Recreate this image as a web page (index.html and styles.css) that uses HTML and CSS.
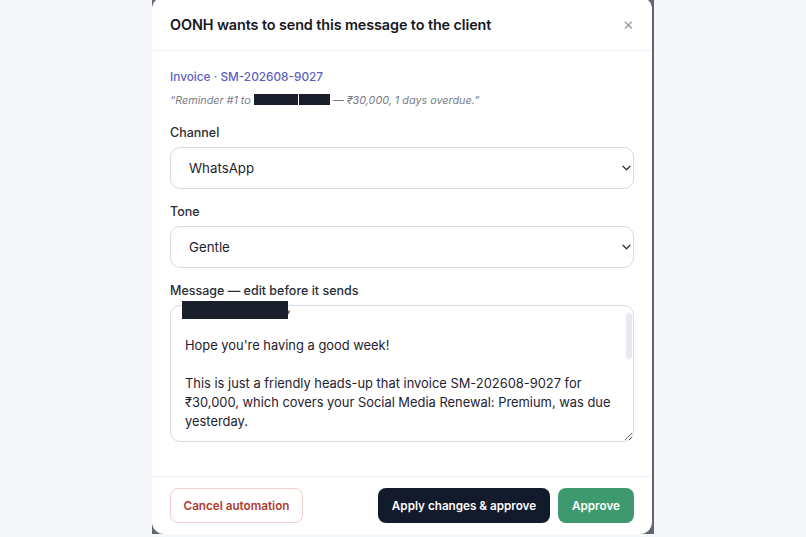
FILE: index.html
```html
<!DOCTYPE html>
<html lang="en">
<head>
<meta charset="utf-8">
<title>Approve message</title>
<link rel="stylesheet" href="styles.css">
</head>
<body>
<div class="backdrop">
  <div class="modal">
    <div class="modal-header">
      <h2 class="title">OONH wants to send this message to the client</h2>
      <span class="close">×</span>
    </div>
    <div class="modal-body">
      <div class="invoice">Invoice · SM-202608-9027</div>
      <div class="quote">“Reminder #1 to <span class="redact r1"></span><span class="redact r2"></span> — ₹30,000, 1 days overdue.”</div>
      <label class="label">Channel</label>
      <div class="select"><span>WhatsApp</span><svg width="9" height="6" viewBox="0 0 9 6"><path d="M1 1.2l3.5 3.5 3.5-3.5" fill="none" stroke="#333" stroke-width="1.3" stroke-linecap="round" stroke-linejoin="round"/></svg></div>
      <label class="label">Tone</label>
      <div class="select"><span>Gentle</span><svg width="9" height="6" viewBox="0 0 9 6"><path d="M1 1.2l3.5 3.5 3.5-3.5" fill="none" stroke="#333" stroke-width="1.3" stroke-linecap="round" stroke-linejoin="round"/></svg></div>
      <label class="label">Message — edit before it sends</label>
      <div class="field">
        <div class="msg" id="msg"><p><span class="name-gap"></span>,</p><p>&nbsp;</p><p>Hope you're having a good week!</p><p>&nbsp;</p><p>This is just a friendly heads-up that invoice SM-202608-9027 for ₹30,000, which covers your Social Media Renewal: Premium, was due yesterday.</p><p>&nbsp;</p><p>Whenever it's convenient, you can settle it using the payment link below. If you've already paid, please ignore this note.</p><p>&nbsp;</p><p>Thank you so much!</p><p>&nbsp;</p><p>Warm regards,</p><p>OONH</p></div>
        <span class="thumb"></span>
        <span class="redact name-box"></span>
      </div>
    </div>
    <div class="modal-footer">
      <button class="btn btn-cancel">Cancel automation</button>
      <div class="actions">
        <button class="btn btn-dark">Apply changes &amp; approve</button>
        <button class="btn btn-green">Approve</button>
      </div>
    </div>
  </div>
</div>
<script src="script.js"></script>
</body>
</html>
```
FILE: styles.css
```css
* { box-sizing: border-box; }
html, body { margin: 0; height: 100%; }
body {
  background: #f6f7fb;
  font-family: Inter, "Noto Sans", sans-serif;
  color: #1f2230;
  overflow: hidden;
}
.backdrop {
  margin-left: 152px;
  width: 502px;
  height: 537px;
  background: #62666f;
  padding-right: 2px;
}
.modal {
  width: 500px;
  height: 537px;
  margin-top: -3px;
  background: #fff;
  border-radius: 12px;
  display: flex;
  flex-direction: column;
}
.modal-header {
  height: 54px;
  flex: none;
  display: flex;
  align-items: center;
  justify-content: space-between;
  padding: 2px 20px 0 18px;
  border-bottom: 1px solid #eef0f3;
}
.title {
  margin: 0;
  font-size: 14.4px;
  font-weight: 600;
  color: #16181f;
  letter-spacing: -0.1px;
}
.close {
  font-size: 17px;
  color: #9b9ea8;
  line-height: 1;
  margin-right: -2px;
}
.modal-body {
  flex: none;
  height: 425px;
  padding: 18px 18px 0;
  display: flex;
  flex-direction: column;
}
.invoice {
  font-size: 11.8px;
  font-weight: 500;
  color: #5b5fc0;
  line-height: 16px;
}
.quote {
  margin-top: 8px;
  font-size: 10.8px;
  font-style: italic;
  color: #7a7d87;
  line-height: 16px;
}
.redact {
  display: inline-block;
  background: #1b1e2b;
  vertical-align: -1px;
}
.r1 { width: 44px; height: 11px; margin-right: 1px; }
.r2 { width: 31px; height: 11px; }
.label {
  display: block;
  font-size: 12.5px;
  font-weight: 500;
  color: #2a2d36;
  line-height: 18px;
  margin-top: 15px;
  margin-bottom: 5px;
}
.select + .label { margin-top: 14px; }
.select {
  height: 42px;
  border: 1.5px solid #d9dbe4;
  border-radius: 10px;
  display: flex;
  align-items: center;
  justify-content: space-between;
  padding: 0 2px 0 18px;
  font-size: 13.3px;
  color: #1f2230;
}
.field {
  position: relative;
  margin-top: 0;
}
.msg {
  height: 137px;
  border: 1.5px solid #d9dbe4;
  border-radius: 10px;
  padding: 10px 14px 10px 14px;
  overflow-y: scroll;
  resize: vertical;
  font-size: 12.9px;
  line-height: 19px;
  color: #1f2230;
  scrollbar-width: none;
}
.msg::-webkit-scrollbar { width: 0; height: 0; }
.msg p { margin: 0; }
.thumb {
  position: absolute;
  right: 2px;
  top: 8px;
  width: 6px;
  height: 46px;
  border-radius: 3px;
  background: #e6e8f6;
}
.name-gap { display: inline-block; width: 102px; }
.name-box {
  position: absolute;
  left: 12px;
  top: -4px;
  width: 106px;
  height: 18px;
}
.modal-footer {
  flex: none;
  height: 58px;
  border-top: 1px solid #eef0f3;
  padding: 0 18px;
  display: flex;
  align-items: center;
  justify-content: space-between;
}
.actions { display: flex; gap: 8px; }
.btn {
  height: 35px;
  border-radius: 8px;
  font-family: Inter, "Noto Sans", sans-serif;
  font-size: 11.7px;
  font-weight: 600;
  padding: 0;
  white-space: nowrap;
  border: 1px solid transparent;
}
.btn-cancel {
  width: 133px;
  background: #fff;
  border-color: #f0cfcc;
  color: #b03a30;
}
.btn-dark {
  width: 172px;
  background: #131a2c;
  color: #fff;
}
.btn-green {
  width: 76px;
  background: #3e9a6e;
  color: #fff;
}
```
FILE: script.js
```js
document.getElementById('msg').scrollTop = 18;
```
